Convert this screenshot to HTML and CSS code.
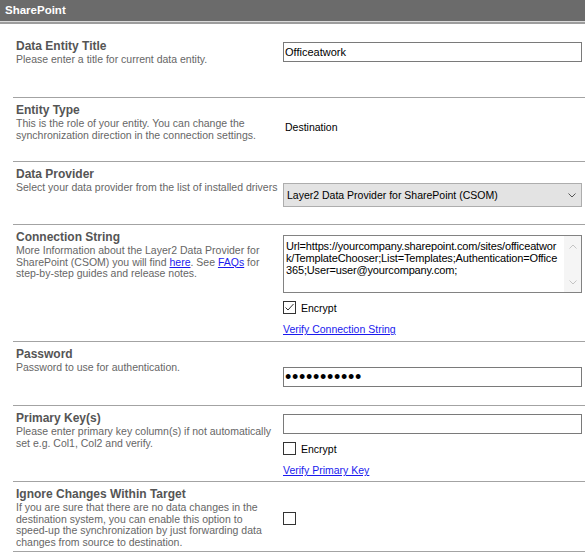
FILE: index.html
```html
<!DOCTYPE html>
<html lang="en">
<head>
	<meta charset="UTF-8">
	<title>SharePoint</title>
	<link rel="stylesheet" href="styles.css">
</head>
<body>
	<div class="panel-head">SharePoint</div>
	<div class="panel-rule"></div>

	<div class="row row-title">
		<div class="info first">
			<div class="label">Data Entity Title</div>
			<div class="hint">Please enter a title for current data entity.</div>
		</div>
		<div class="field f-title">
			<input class="text-input" type="text" value="Officeatwork">
		</div>
	</div>

	<div class="row row-type">
		<div class="info">
			<div class="label">Entity Type</div>
			<div class="hint">This is the role of your entity. You can change the<br>synchronization direction in the connection settings.</div>
		</div>
		<div class="field f-type">
			<div class="plain-value">Destination</div>
		</div>
	</div>

	<div class="row row-provider">
		<div class="info">
			<div class="label">Data Provider</div>
			<div class="hint">Select your data provider from the list of installed drivers</div>
		</div>
		<div class="field f-provider">
			<div class="select">
				<span>Layer2 Data Provider for SharePoint (CSOM)</span>
				<svg width="8" height="5" viewBox="0 0 8 5"><path d="M0.5 0.5 L4 4 L7.5 0.5" fill="none" stroke="#555" stroke-width="1"/></svg>
			</div>
		</div>
	</div>

	<div class="row row-conn">
		<div class="info">
			<div class="label">Connection String</div>
			<div class="hint">More Information about the Layer2 Data Provider for<br>SharePoint (CSOM) you will find <a href="#">here</a>. See <a href="#">FAQs</a> for<br>step-by-step guides and release notes.</div>
		</div>
		<div class="field f-conn">
			<div class="textbox">
				<div class="textbox-text">Url=https://yourcompany.sharepoint.com/sites/officeatwor<br>k/TemplateChooser;List=Templates;Authentication=Office<br>365;User=user@yourcompany.com;</div>
				<div class="scrollbar">
					<div class="scroll-btn"><svg width="8" height="5" viewBox="0 0 8 5"><path d="M0.5 4.5 L4 1 L7.5 4.5" fill="none" stroke="#c4c4c4" stroke-width="1"/></svg></div>
					<div class="scroll-btn"><svg width="8" height="5" viewBox="0 0 8 5"><path d="M0.5 0.5 L4 4 L7.5 0.5" fill="none" stroke="#c4c4c4" stroke-width="1"/></svg></div>
				</div>
			</div>
			<div class="check-row">
				<div class="checkbox"><svg width="11" height="11" viewBox="0 0 11 11"><path d="M1.5 5.5 L4 8 L9.5 2" fill="none" stroke="#333" stroke-width="1"/></svg></div>
				<span>Encrypt</span>
			</div>
			<a class="link" href="#">Verify Connection String</a>
		</div>
	</div>

	<div class="row row-pass">
		<div class="info">
			<div class="label">Password</div>
			<div class="hint">Password to use for authentication.</div>
		</div>
		<div class="field f-pass">
			<div class="pass-input">•••••••••••</div>
		</div>
	</div>

	<div class="row row-key">
		<div class="info">
			<div class="label">Primary Key(s)</div>
			<div class="hint">Please enter primary key column(s) if not automatically<br>set e.g. Col1, Col2 and verify.</div>
		</div>
		<div class="field f-key">
			<input class="text-input" type="text" value="">
			<div class="check-row">
				<div class="checkbox"></div>
				<span>Encrypt</span>
			</div>
			<a class="link" href="#">Verify Primary Key</a>
		</div>
	</div>

	<div class="row row-ignore">
		<div class="info">
			<div class="label">Ignore Changes Within Target</div>
			<div class="hint">If you are sure that there are no data changes in the<br>destination system, you can enable this option to<br>speed-up the synchronization by just forwarding data<br>changes from source to destination.</div>
		</div>
		<div class="field f-ignore">
			<div class="checkbox"></div>
		</div>
	</div>
</body>
</html>
```

FILE: styles.css
```css
html,body {
	margin: 0;
	padding: 0;
}
body {
	width: 585px;
	background: #fff;
	color: #000;
	font-family: "Liberation Sans", Arial, sans-serif;
}
.panel-head {
	height: 21px;
	line-height: 21px;
	padding-left: 5px;
	background: #6b6b6b;
	color: #fff;
	font-size: 11.5px;
	font-weight: bold;
	border-bottom: 1px solid #d9d9d9;
}
.panel-rule {
	height: 2px;
	background: #9d9d9d;
}
.row {
	display: grid;
	grid-template-columns: 270px 299px;
	align-items: start;
	margin-left: 13px;
	border-bottom: 1px solid #a3a3a3;
	box-sizing: border-box;
}
.row-title { height: 74px; }
.row-type { height: 64px; }
.row-provider { height: 63px; }
.row-conn { height: 117px; }
.row-pass { height: 64px; }
.row-key { height: 76px; }
.row-ignore { height: 70px; }

.info {
	padding: 4px 0 0 3px;
}
.info.first {
	padding-top: 14px;
}
.label {
	font-size: 12px;
	font-weight: bold;
	line-height: 16px;
	color: #555;
}
.hint {
	font-size: 10.5px;
	line-height: 11.6px;
	color: #666;
	white-space: nowrap;
}
.hint a,
.link {
	color: #1a1aee;
	text-decoration: underline;
}

.f-title { margin-top: 18px; }
.f-type { margin-top: 23px; }
.f-provider { margin-top: 21px; }
.f-conn { margin-top: 10px; }
.f-pass { margin-top: 25px; }
.f-key { margin-top: 8px; }
.f-ignore { margin-top: 30px; }

.text-input {
	display: block;
	width: 299px;
	height: 20px;
	margin: 0;
	padding: 0 1px;
	box-sizing: border-box;
	border: 1px solid #7a7a7a;
	border-radius: 0;
	outline: none;
	font: 11px "Liberation Sans", Arial, sans-serif;
	color: #000;
	background: #fff;
}
.plain-value {
	padding-left: 2px;
	font-size: 10.5px;
	line-height: 12px;
}
.select {
	display: flex;
	align-items: center;
	justify-content: space-between;
	height: 24px;
	padding: 0 5px 0 3px;
	box-sizing: border-box;
	border: 1px solid #adadad;
	background: #e3e3e3;
	font-size: 10.5px;
}
.textbox {
	display: flex;
	height: 58px;
	box-sizing: border-box;
	border: 1px solid #828282;
}
.textbox-text {
	flex: 1;
	padding: 4px 0 0 2px;
	font-size: 11px;
	line-height: 12px;
	letter-spacing: -0.15px;
	white-space: nowrap;
	overflow: hidden;
}
.scrollbar {
	width: 17px;
	background: #f5f5f5;
	display: flex;
	flex-direction: column;
	justify-content: space-between;
}
.scroll-btn {
	height: 20px;
	display: flex;
	align-items: center;
	justify-content: center;
}
.scroll-btn svg {
	display: block;
}
.check-row {
	display: flex;
	align-items: center;
	height: 13px;
	margin-top: 8px;
	font-size: 10.5px;
}
.checkbox {
	width: 13px;
	height: 13px;
	box-sizing: border-box;
	border: 1px solid #333;
	background: #fff;
	margin-right: 5px;
}
.checkbox svg {
	display: block;
}
.link {
	display: block;
	margin-top: 9px;
	font-size: 10.5px;
	line-height: 12px;
	width: max-content;
}
.pass-input {
	height: 20px;
	padding-left: 1px;
	box-sizing: border-box;
	border: 1px solid #7a7a7a;
	font-size: 18px;
	line-height: 18px;
	letter-spacing: 0.7px;
	overflow: hidden;
	white-space: nowrap;
}
```
